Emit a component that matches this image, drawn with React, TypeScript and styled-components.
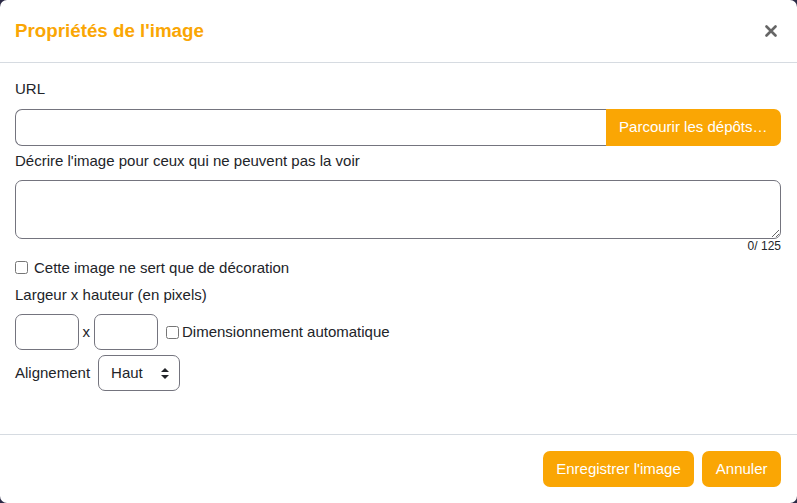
import React, { useState } from "react";
import styled, { createGlobalStyle } from "styled-components";

const accent = "#faa604";
const ink = "#222429";
const fieldBorder = "#74747e";

const GlobalStyle = createGlobalStyle`
    html, body {
        margin: 0;
        height: 100%;
        background: #2b2a46;
    }
    #root {
        height: 100%;
    }
    * {
        box-sizing: border-box;
    }
`;

const Modal = styled.div`
    height: 100vh;
    display: flex;
    flex-direction: column;
    background: #fff;
    border-radius: 7px;
    font-family: "Liberation Sans", Arial, sans-serif;
    font-size: 15px;
    line-height: 22.5px;
    color: ${ink};
`;

const Header = styled.header`
    height: 63px;
    flex: none;
    display: flex;
    align-items: center;
    justify-content: space-between;
    padding: 0 19px 0 15px;
    border-bottom: 1px solid #d6dbe1;
`;

const Title = styled.h1`
    margin: 0;
    font-size: 18.75px;
    font-weight: 700;
    color: ${accent};
`;

const CloseButton = styled.button`
    border: 0;
    background: none;
    padding: 0;
    width: 14px;
    height: 14px;
    display: flex;
    align-items: center;
    justify-content: center;
    color: #666;
    cursor: pointer;
`;

const Body = styled.div`
    flex: 1;
    padding: 15px 16px 0 15px;
`;

const Label = styled.label<{ $gap?: number }>`
    display: block;
    margin-bottom: ${p => p.$gap ?? 8}px;
`;

const InputGroup = styled.div`
    display: flex;
    height: 37.5px;
    margin-bottom: 3.5px;
`;

const TextInput = styled.input<{ $joined?: boolean }>`
    flex: 1;
    min-width: 0;
    border: 1px solid ${fieldBorder};
    border-radius: ${p => (p.$joined ? "7px 0 0 7px" : "7px")};
    border-right-width: ${p => (p.$joined ? 0 : 1)}px;
    font: inherit;
    padding: 0 10px;
    outline: none;
`;

const Button = styled.button<{ $joined?: boolean }>`
    background: ${accent};
    color: #fff;
    border: 0;
    border-radius: ${p => (p.$joined ? "0 7px 7px 0" : "7px")};
    font: inherit;
    padding: 0 13.5px;
    white-space: nowrap;
    cursor: pointer;
`;

const TextArea = styled.textarea`
    display: block;
    width: 100%;
    height: 59px;
    border: 1px solid ${fieldBorder};
    border-radius: 7px;
    font: inherit;
    padding: 6px 10px;
    outline: none;
`;

const Counter = styled.div`
    text-align: right;
    font-size: 12px;
    line-height: 14px;
    margin-bottom: 4px;
`;

const CheckRow = styled.label`
    display: flex;
    align-items: center;
    gap: 6px;
    margin-bottom: 4.5px;
`;

const CheckBox = styled.input.attrs({ type: "checkbox" })`
    width: 13px;
    height: 13px;
    margin: 0;
`;

const SizeRow = styled.div`
    display: flex;
    align-items: center;
    gap: 3.5px;
    margin-bottom: 5px;
`;

const SizeInput = styled(TextInput)`
    flex: none;
    width: 64px;
    height: 36px;
`;

const InlineCheck = styled(CheckRow)`
    margin: 0 0 0 5px;
    gap: 3px;
`;

const AlignRow = styled.div`
    display: flex;
    align-items: center;
    gap: 8px;
`;

const SelectWrap = styled.div`
    position: relative;
    width: 82px;
    height: 36px;
`;

const Select = styled.select`
    appearance: none;
    width: 100%;
    height: 100%;
    border: 1px solid ${fieldBorder};
    border-radius: 7px;
    background: #fff;
    font: inherit;
    color: ${ink};
    padding: 0 0 0 12px;
    outline: none;
`;

const SelectArrows = styled.svg`
    position: absolute;
    right: 11px;
    top: 13px;
    pointer-events: none;
`;

const Footer = styled.footer`
    flex: none;
    height: 69px;
    border-top: 1px solid #d6dbe1;
    display: flex;
    align-items: center;
    justify-content: flex-end;
    gap: 8px;
    padding: 0 16px;
`;

const FooterButton = styled(Button)`
    height: 36px;
`;

export default function App() {
    const [alt, setAlt] = useState("");

    return (
        <>
            <GlobalStyle />
            <Modal>
                <Header>
                    <Title>Propriétés de l'image</Title>
                    <CloseButton aria-label="Fermer">
                        <svg width="12" height="12" viewBox="0 0 12 12">
                            <path d="M1.5 1.5l9 9M10.5 1.5l-9 9" stroke="currentColor" strokeWidth="2.6" strokeLinecap="round" />
                        </svg>
                    </CloseButton>
                </Header>
                <Body>
                    <Label>URL</Label>
                    <InputGroup>
                        <TextInput $joined />
                        <Button $joined>Parcourir les dépôts…</Button>
                    </InputGroup>
                    <Label $gap={7.5}>Décrire l'image pour ceux qui ne peuvent pas la voir</Label>
                    <TextArea value={alt} maxLength={125} onChange={e => setAlt(e.target.value)} />
                    <Counter>{alt.length}/ 125</Counter>
                    <CheckRow>
                        <CheckBox />
                        Cette image ne sert que de décoration
                    </CheckRow>
                    <Label $gap={8}>Largeur x hauteur (en pixels)</Label>
                    <SizeRow>
                        <SizeInput />
                        x
                        <SizeInput />
                        <InlineCheck>
                            <CheckBox />
                            Dimensionnement automatique
                        </InlineCheck>
                    </SizeRow>
                    <AlignRow>
                        Alignement
                        <SelectWrap>
                            <Select defaultValue="top">
                                <option value="top">Haut</option>
                                <option value="middle">Milieu</option>
                                <option value="bottom">Bas</option>
                            </Select>
                            <SelectArrows width="8" height="11" viewBox="0 0 8 11">
                                <path d="M4 0L8 4H0z M4 11L0 7H8z" fill={ink} />
                            </SelectArrows>
                        </SelectWrap>
                    </AlignRow>
                </Body>
                <Footer>
                    <FooterButton>Enregistrer l'image</FooterButton>
                    <FooterButton>Annuler</FooterButton>
                </Footer>
            </Modal>
        </>
    );
}
